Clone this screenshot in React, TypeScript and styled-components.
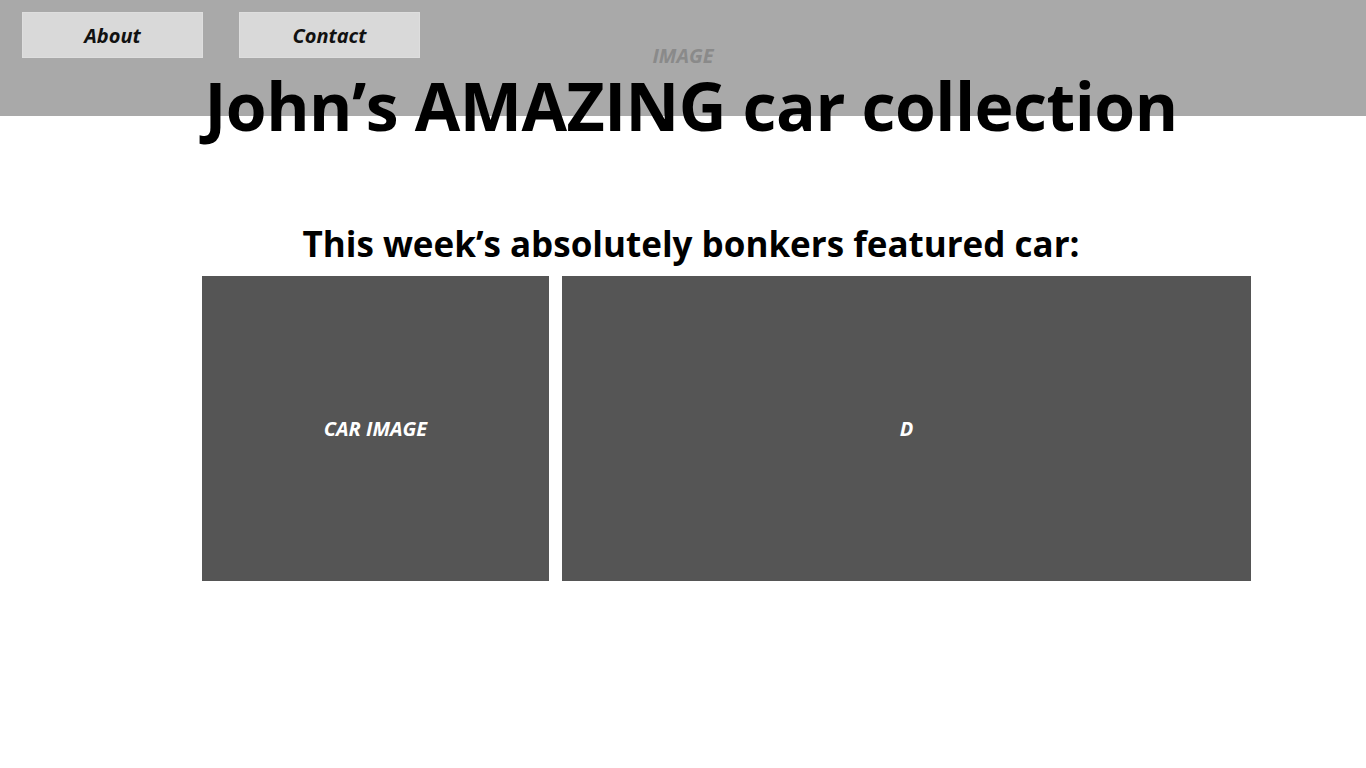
import styled, { createGlobalStyle } from "styled-components";

const GlobalStyle = createGlobalStyle`
  html, body {
    margin: 0;
    padding: 0;
    background: #ffffff;
    font-family: "Open Sans", "Liberation Sans", sans-serif;
  }
`;

const Page = styled.div`
  width: 1366px;
  min-height: 768px;
  background: #ffffff;
`;

/** Grey banner across the top, holds the nav buttons and the banner image label. */
const Banner = styled.header`
  display: grid;
  box-sizing: border-box;
  height: 116px;
  padding: 12px 0 0 22px;

  background: #a9a9a9;
`;

const Nav = styled.nav`
  grid-area: 1 / 1;
  align-self: start;
  display: flex;
  gap: 36px;
`;

const NavButton = styled.button`
  box-sizing: border-box;
  width: 181px;
  height: 46px;
  margin: 0;
  padding: 0;

  background: #d9d9d9;
  border: 1px solid #dedede;

  font: italic 700 20px "Open Sans", "Liberation Sans", sans-serif;
  color: #111111;
  cursor: pointer;
`;

const BannerLabel = styled.span`
  grid-area: 1 / 1;
  align-self: start;
  justify-self: center;
  margin: 34px 22px 0 0;

  font: italic 700 20px/1 "Open Sans", "Liberation Sans", sans-serif;
  color: #8a8a8a;
`;

const Title = styled.h1`
  margin: -44px 0 0 16px;

  text-align: center;
  font: 700 66px/1 "Open Sans", "Liberation Sans", sans-serif;
  letter-spacing: -0.5px;
  color: #000000;
`;

const Subtitle = styled.h2`
  margin: 85px 0 0 16px;

  text-align: center;
  font: 700 35px/1.2 "Open Sans", "Liberation Sans", sans-serif;
  color: #000000;
`;

const Feature = styled.section`
  display: grid;
  grid-template-columns: 347px 689px;
  gap: 13px;
  margin: 11px 0 0 202px;
`;

const Panel = styled.div`
  display: flex;
  align-items: center;
  justify-content: center;
  height: 305px;

  background: #555555;

  font: italic 700 20px "Open Sans", "Liberation Sans", sans-serif;
  color: #ffffff;
`;

export default function App() {
  return (
    <Page>
      <GlobalStyle />
      <Banner>
        <Nav>
          <NavButton>About</NavButton>
          <NavButton>Contact</NavButton>
        </Nav>
        <BannerLabel>IMAGE</BannerLabel>
      </Banner>
      <Title>John’s AMAZING car collection</Title>
      <Subtitle>This week’s absolutely bonkers featured car:</Subtitle>
      <Feature>
        <Panel>CAR IMAGE</Panel>
        <Panel>D</Panel>
      </Feature>
    </Page>
  );
}
